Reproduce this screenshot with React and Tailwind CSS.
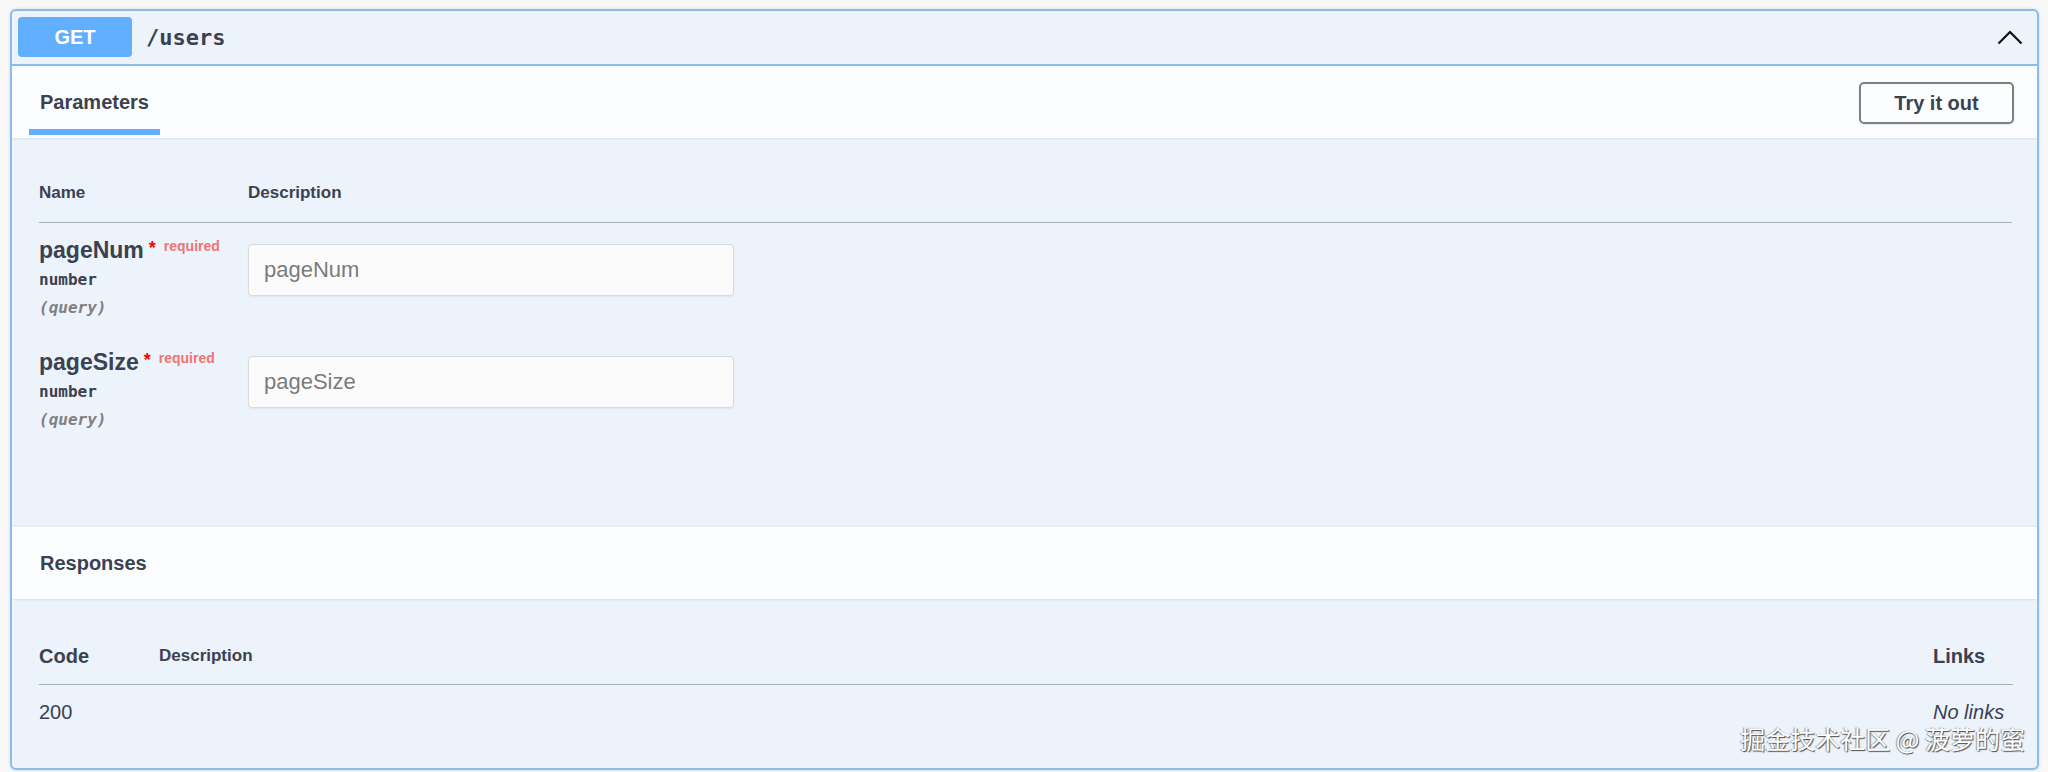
import React from 'react';

const params = [
  { name: 'pageNum', type: 'number', where: '(query)' },
  { name: 'pageSize', type: 'number', where: '(query)' },
];

function ChevronUp() {
  return (
    <svg width="26" height="16" viewBox="0 0 26 16" fill="none">
      <path d="M1.5 14.5 L13 3 L24.5 14.5" stroke="#111" strokeWidth="2.2" />
    </svg>
  );
}

export default function App() {
  return (
    <div className="min-h-screen bg-[#f8f8f8] pt-[9px] pl-[10px] pr-[9px] pb-[4px] font-['Liberation_Sans',Arial,sans-serif] text-[#3b4151]">
      <div className="relative rounded-[6px] border-2 border-[#89bdf0] bg-[#ecf3fb] shadow-[0_0_3px_rgba(0,0,0,0.15)] overflow-hidden">
        {/* summary */}
        <div className="flex items-center border-b-2 border-[#89bdf0] px-[6px] pt-[6px] pb-[7px]">
          <div className="flex h-[40px] w-[114px] items-center justify-center rounded-[4px] bg-[#61affe] text-[20px] font-bold text-white">
            GET
          </div>
          <div className="ml-[14px] font-['DejaVu_Sans_Mono',monospace] text-[22px] font-bold text-[#3b4151]">
            /users
          </div>
          <div className="ml-auto mr-[8px] flex items-center">
            <ChevronUp />
          </div>
        </div>

        {/* parameters tab header */}
        <div className="flex h-[72px] items-start justify-between bg-white/80 pl-[17px] pr-[23px] shadow-[0_1px_2px_rgba(0,0,0,0.08)]">
          <div className="flex flex-col pt-[24px]">
            <span className="px-[11px] text-[20px] leading-[24px] font-bold">Parameters</span>
            <div className="mt-[15px] h-[6px] bg-[#61affe]" />
          </div>
          <button className="mt-[16px] h-[42px] w-[155px] rounded-[5px] border-2 border-[#808080] bg-transparent text-[20px] font-bold text-[#3b4151] shadow-[0_1px_2px_rgba(0,0,0,0.1)]">
            Try it out
          </button>
        </div>

        {/* parameters table */}
        <div className="pl-[27px] pr-[25px] pt-[45px] pb-[80px]">
          <div className="flex border-b border-[#a9b1bd] pb-[19px] text-[17px] leading-[20px] font-bold">
            <div className="w-[209px]">Name</div>
            <div>Description</div>
          </div>
          {params.map((p) => (
            <div key={p.name} className="flex pt-[14px] pb-[15px]">
              <div className="w-[209px]">
                <div className="flex items-start whitespace-nowrap">
                  <span className="text-[23px] leading-[26px] font-bold">{p.name}</span>
                  <span className="ml-[5px] mt-[1px] text-[18px] leading-[20px] font-bold text-[#f00]">*</span>
                  <span className="ml-[8px] text-[14px] leading-[18px] font-bold text-[#f27373]">required</span>
                </div>
                <div className="mt-[5px] font-['DejaVu_Sans_Mono',monospace] text-[16px] leading-[24px] font-bold">
                  {p.type}
                </div>
                <div className="mt-[4px] font-['DejaVu_Sans_Mono',monospace] text-[16px] leading-[24px] font-bold italic text-[#808080]">
                  {p.where}
                </div>
              </div>
              <div className="pt-[7px]">
                <input
                  placeholder={p.name}
                  className="h-[52px] w-[486px] rounded-[4px] border border-[#d9d9d9] bg-[#fbfbfb] px-[15px] text-[22px] text-[#3b4151] placeholder:text-[#7b7b7b] shadow-[0_1px_2px_rgba(0,0,0,0.06)]"
                />
              </div>
            </div>
          ))}
        </div>

        {/* responses header */}
        <div className="flex h-[72px] items-center bg-white/80 pl-[28px] shadow-[0_1px_2px_rgba(0,0,0,0.08),0_-1px_2px_rgba(0,0,0,0.04)]">
          <span className="text-[20px] font-bold">Responses</span>
        </div>

        {/* responses table */}
        <div className="pl-[27px] pr-[24px] pt-[45px] pb-[44px]">
          <div className="flex items-center border-b border-[#a9b1bd] pb-[16px] leading-[24px] font-bold">
            <div className="w-[120px] text-[20px]">Code</div>
            <div className="flex-1 text-[17px]">Description</div>
            <div className="w-[80px] text-[20px]">Links</div>
          </div>
          <div className="flex pt-[15px] text-[20px] leading-[24px]">
            <div className="w-[120px]">200</div>
            <div className="flex-1" />
            <div className="w-[80px] italic">No links</div>
          </div>
        </div>

        <div className="absolute bottom-[18px] right-[12px] font-['Noto_Sans_CJK_SC',sans-serif] text-[25px] leading-[24px] text-white [text-shadow:1px_1px_1px_rgba(60,60,60,0.9),-1px_0_1px_rgba(60,60,60,0.5)]">
          掘金技术社区 @ 菠萝的蜜
        </div>
      </div>
    </div>
  );
}
